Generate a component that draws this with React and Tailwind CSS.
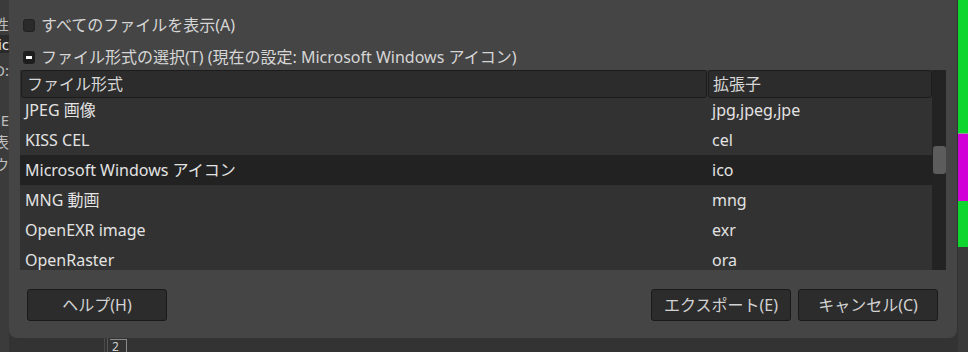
import React from "react";

const FONT = { fontFamily: '"Noto Sans", "Noto Sans CJK JP", sans-serif' };

const rows = [
  ["JPEG 画像", "jpg,jpeg,jpe"],
  ["KISS CEL", "cel"],
  ["Microsoft Windows アイコン", "ico", true],
  ["MNG 動画", "mng"],
  ["OpenEXR image", "exr"],
  ["OpenRaster", "ora"],
];

function LeftStrip() {
  const lines = [
    { t: "性", h: "h-[18px] mt-[15px]" },
    { t: "mic", h: "h-[18px] mt-[2px]", sel: true },
    { t: "O:", h: "h-[18px] mt-[8px]" },
    { t: "E", h: "h-[18px] mt-[32px]" },
    { t: "表", h: "h-[18px] mt-[4px]" },
    { t: "ウ", h: "h-[18px] mt-[4px]" },
  ];
  return (
    <div className="w-[9px] h-full bg-[#3b3b3b] flex flex-col shrink-0">
      {lines.map((l, i) => (
        <div
          key={i}
          className={`${l.h} flex justify-end items-center overflow-hidden whitespace-nowrap text-[15px] ${
            l.sel ? "bg-[#2a2a2a] text-[#e6e6e6]" : "text-[#bdbdbd]"
          }`}
        >
          <span className="shrink-0">{l.t}</span>
        </div>
      ))}
    </div>
  );
}

function Button({ children }) {
  return (
    <div className="w-[140px] h-[32px] flex items-center justify-center rounded-[3px] bg-[#2c2c2c] border border-[#1a1a1a] text-[16px] text-[#d2d2d2]">
      {children}
    </div>
  );
}

export default function App() {
  return (
    <div
      className="w-[968px] h-[352px] flex bg-[#333333] overflow-hidden"
      style={FONT}
    >
      <LeftStrip />
      <div className="w-[948px] h-full flex flex-col shrink-0">
        <div className="h-[338px] bg-[#454545] rounded-b-[8px] flex flex-col px-[11px] shrink-0">
          <div className="mt-[15px] h-[20px] flex items-center gap-[6px] pl-[3px]">
            <div className="w-[12px] h-[13px] rounded-[3px] bg-[#2a2a2a] border border-[#222]" />
            <span className="text-[16px] text-[#d6d6d6] leading-none">
              すべてのファイルを表示(A)
            </span>
          </div>
          <div className="mt-[12px] h-[20px] flex items-center gap-[6px] pl-[3px]">
            <div className="w-[12px] h-[13px] rounded-[3px] bg-[#1e1e1e] flex items-center justify-center">
              <div className="w-[6px] h-[3px] bg-white" />
            </div>
            <span className="text-[16px] text-[#d6d6d6] leading-none whitespace-nowrap">
              ファイル形式の選択(T) (現在の設定: Microsoft Windows アイコン)
            </span>
          </div>
          <div className="mt-[3px] h-[200px] flex bg-[#323232] shrink-0">
            <div className="flex-1 flex flex-col">
              <div className="h-[29px] flex shrink-0 pl-[1px]">
                <div className="w-[686px] h-[28px] bg-[#2c2c2c] border border-[#1c1c1c] rounded-[3px] flex items-center pl-[5px] text-[16px] text-[#d6d6d6]">
                  ファイル形式
                </div>
                <div className="ml-[1px] w-[224px] h-[28px] bg-[#2c2c2c] border border-[#1c1c1c] rounded-[3px] flex items-center pl-[4px] text-[16px] text-[#d6d6d6]">
                  拡張子
                </div>
              </div>
              <div className="flex-1 overflow-hidden">
                <div className="-mt-[4px] flex flex-col">
                  {rows.map(([a, b, sel], i) => (
                    <div
                      key={i}
                      className={`h-[30px] flex items-center text-[16px] text-[#e2e2e2] shrink-0 ${
                        sel ? "bg-[#222222]" : ""
                      }`}
                    >
                      <div className="w-[687px] pl-[5px] whitespace-nowrap">{a}</div>
                      <div className="pl-[5px] whitespace-nowrap">{b}</div>
                    </div>
                  ))}
                </div>
              </div>
            </div>
            <div className="w-[15px] bg-[#232323] flex flex-col items-center">
              <div className="mt-[76px] w-[13px] h-[28px] rounded-[3px] bg-[#5c5c5c]" />
            </div>
          </div>
          <div className="mt-[19px] h-[32px] flex justify-between items-center pl-[7px] pr-[8px]">
            <Button>ヘルプ(H)</Button>
            <div className="flex gap-[7px]">
              <Button>エクスポート(E)</Button>
              <Button>キャンセル(C)</Button>
            </div>
          </div>
        </div>
        <div className="flex-1 flex">
          <div className="ml-[95px] w-[1px] bg-[#4a4a4a]" />
          <div className="ml-[2px] w-[1px] bg-[#555]" />
          <div className="ml-[2px] mt-[1px] w-[17px] border-t border-r border-[#8a8a8a] text-[12px] leading-none text-[#cfcfcf] pl-[2px] pt-[1px]">
            2
          </div>
        </div>
      </div>
      <div className="w-[11px] h-full flex shrink-0">
        <div className="w-[1px] bg-[#333]" />
        <div className="flex-1 flex flex-col">
          <div className="h-[133px] bg-[#0fd62f]" />
          <div className="h-[1px] bg-[#9a9a9a]" />
          <div className="h-[67px] bg-[#d000d6]" />
          <div className="h-[46px] bg-[#0fd62f]" />
          <div className="flex-1 bg-[#3a3a3a]" />
        </div>
      </div>
    </div>
  );
}
